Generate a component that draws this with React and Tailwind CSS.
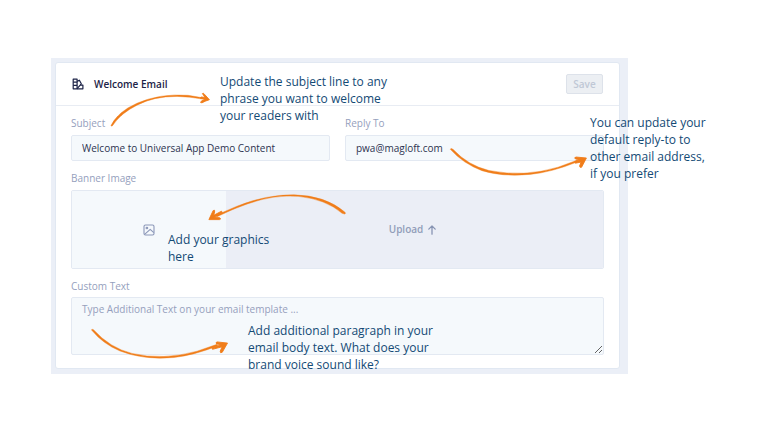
import React from 'react';

// ── Icons ─────────────────────────────────────────────────────────────────────

function SwatchIcon() {
    return (
        <svg className="h-3 w-3 shrink-0" viewBox="0 0 12 12" fill="none" stroke="#1c2347" strokeWidth="1.2" strokeLinejoin="round" aria-hidden="true">
            <path d="M1.2 1.2h3.9v9.6H1.2z" />
            <path d="M1.2 4.2h3.9M1.2 7.3h3.9" />
            <path d="M5.1 3.4l2.3-1.2 1.9 3.6-4.2 4.8" />
            <path d="M8.3 7.1h2.6v3.7H5.1" />
        </svg>
    );
}

function ImageIcon() {
    return (
        <svg className="h-3 w-3" viewBox="0 0 12 12" fill="none" stroke="#8b97b8" strokeWidth="1.1" strokeLinejoin="round" role="img" aria-label="No image">
            <rect x="1" y="1" width="10" height="10" rx="1.5" />
            <circle cx="3.9" cy="4" r="0.8" />
            <path d="M1.6 10.4l5.6-5 3.6 3.2" />
        </svg>
    );
}

function UploadArrow() {
    return (
        <svg className="h-[10px] w-2" viewBox="0 0 8 10" fill="none" stroke="#8794b3" strokeWidth="1.3" strokeLinecap="round" strokeLinejoin="round" aria-hidden="true">
            <path d="M4 9.2V1M0.8 4.1L4 0.9l3.2 3.2" />
        </svg>
    );
}

// ── Annotations ───────────────────────────────────────────────────────────────

function Note({ className, children }) {
    return (
        <p className={`absolute whitespace-pre text-[12px] leading-[17px] text-[#134a75] ${className}`}>
            {children}
        </p>
    );
}

// Tapered stroke plus a brushed arrow head, both filled
function Arrow({ className, viewBox, shaft, head }) {
    return (
        <svg className={`pointer-events-none absolute ${className}`} viewBox={viewBox} fill="#f07d1a" stroke="#f07d1a" strokeLinejoin="round" aria-hidden="true">
            <path d={shaft} strokeWidth="0.4" />
            <path d={head} strokeWidth="0.9" />
        </svg>
    );
}

// ── Form ──────────────────────────────────────────────────────────────────────

const LABEL = 'block text-[10px] leading-[14px] text-[#95a0bd]';
const FIELD = 'block w-full rounded-[2px] border border-[#e3e9f2] bg-[#f5f9fc] px-[10px] text-[10px] text-[#2d3350] outline-none';

function TextField({ id, label, value }) {
    return (
        <div className="min-w-0 flex-1">
            <label htmlFor={id} className={LABEL}>{label}</label>
            <input id={id} type="text" defaultValue={value} className={`${FIELD} mt-[5px] h-[26px]`} />
        </div>
    );
}

export default function App() {
    return (
        <div className="min-h-screen bg-white pt-[58px] pr-[140px] pl-[51px] font-['Open_Sans','Noto_Sans',sans-serif]">
            <main className="relative bg-[#ebeff7] pt-1 pr-2 pb-[5px] pl-1">
                <section className="rounded-[3px] border border-[#e1e8f2] bg-white">
                    <header className="flex h-[43px] items-center gap-[10px] border-b border-[#e8ecf3] px-4">
                        <SwatchIcon />
                        <h1 className="flex-1 text-[10px] font-semibold text-[#1c2347]">Welcome Email</h1>
                        <button type="button" className="h-5 w-[37px] rounded-[2px] border border-[#dde2ea] bg-[#eceff3] text-[10px] font-semibold text-[#c0c8d6]">
                            Save
                        </button>
                    </header>

                    <form className="px-[15px] pt-[10px] pb-[13px]">
                        <div className="flex gap-[15px]">
                            <TextField id="subject" label="Subject" value="Welcome to Universal App Demo Content" />
                            <TextField id="reply-to" label="Reply To" value="pwa@magloft.com" />
                        </div>

                        <h2 className={`${LABEL} mt-[10px]`}>Banner Image</h2>
                        <div className="mt-[5px] flex h-[79px] overflow-hidden rounded-[2px] border border-[#e3e9f2]">
                            <div className="flex w-[154px] shrink-0 items-center justify-center bg-[#f5f9fc]">
                                <ImageIcon />
                            </div>
                            <button type="button" className="flex flex-1 items-center justify-center gap-[5px] bg-[#ebeef6] pr-1 text-[10px] font-semibold text-[#919db9]">
                                Upload
                                <UploadArrow />
                            </button>
                        </div>

                        <label htmlFor="custom-text" className={`${LABEL} mt-[10px]`}>Custom Text</label>
                        <textarea
                            id="custom-text"
                            placeholder="Type Additional Text on your email template ..."
                            className={`${FIELD} mt-1 h-[58px] resize py-1 leading-[14px] placeholder:text-[#95a0bd]`}
                        />
                    </form>
                </section>

                <Note className="top-[15px] left-[169px]">
                    {'Update the subject line to any\nphrase you want to welcome\nyour readers with'}
                </Note>
                <Arrow
                    className="top-[32px] left-[59px] h-[40px] w-[104px]"
                    viewBox="110 90 104 40"
                    shaft="M111 125.4Q118 111.500 137 103.200Q160 93.200 188 95.300L203 97.800L202.700 99.100Q190 96.700 177 96.400Q153 96.400 137 105.200Q121 113 112.700 125.400Q111.500 127 111 125.400Z"
                    head="M202.400 93.600Q203.500 92.800 204.400 94.200L209.400 99.700Q205 101 202 102.800Q199.800 103 201 101.400L204.700 99.300L200.400 98.300L201 97L205 97.400Z"
                />

                <Note className="top-[56px] left-[539px]">
                    {'You can update your\ndefault reply-to to\nother email address,\nif you prefer'}
                </Note>
                <Arrow
                    className="top-[87px] left-[397px] h-[35px] w-[142px]"
                    viewBox="448 145 142 35"
                    shaft="M450.300 149.300Q450.600 147.500 453 149.300Q468 165.500 489 170.500Q524 177.500 558 167.200L577 160.200L577.700 161.800Q551 172.500 530 174.400Q502 177 482 170.700Q463 163.500 450.300 149.300Z"
                    head="M586.400 158L575.700 157Q573.500 158.300 576 159.100L579.300 159.700L574.700 161.600L575.400 163.200L581 162.100L579.600 166Q579.700 168 581.600 167.200Z"
                />

                <Note className="top-[173px] left-[117px]">
                    {'Add your graphics\nhere'}
                </Note>
                <Arrow
                    className="top-[134px] left-[156px] h-[32px] w-[142px]"
                    viewBox="207 192 142 32"
                    shaft="M344.700 214.100Q346.300 213.600 344.700 211.900Q325 195.400 294 194.800Q266 194.500 237 206.200L216 215.200L217 216.700Q249 201 273 197.300Q300 193.300 323 202Q334 206.300 342 213.200Z"
                    head="M208.900 219.600L213.200 210.500Q215.200 209.300 214.600 212L213.700 215.300L221.500 211.200L222.300 212.600L214.500 217.500L219.500 217.700Q221.800 219 219.500 219.600Z"
                />

                <Note className="top-[264px] left-[197px]">
                    {'Add additional paragraph in your\nemail body text. What does your\nbrand voice sound like?'}
                </Note>
                <Arrow
                    className="top-[268px] left-[39px] h-[36px] w-[140px]"
                    viewBox="90 326 140 36"
                    shaft="M91.500 330Q91.500 328.500 93.500 329.700Q110 348 132 353.400Q163 360.600 197 351.200L217 344.300L217.700 345.900Q193 355.500 174 357.500Q144 360.400 120 351Q103 344 91.500 330Z"
                    head="M227.500 343.100L217 341.900Q214.800 342.700 217 344L221 344.800L212 348L212.500 349.300L222.100 346.800L220.200 351.200Q220 353.600 222.300 352.200Z"
                />
            </main>
        </div>
    );
}
